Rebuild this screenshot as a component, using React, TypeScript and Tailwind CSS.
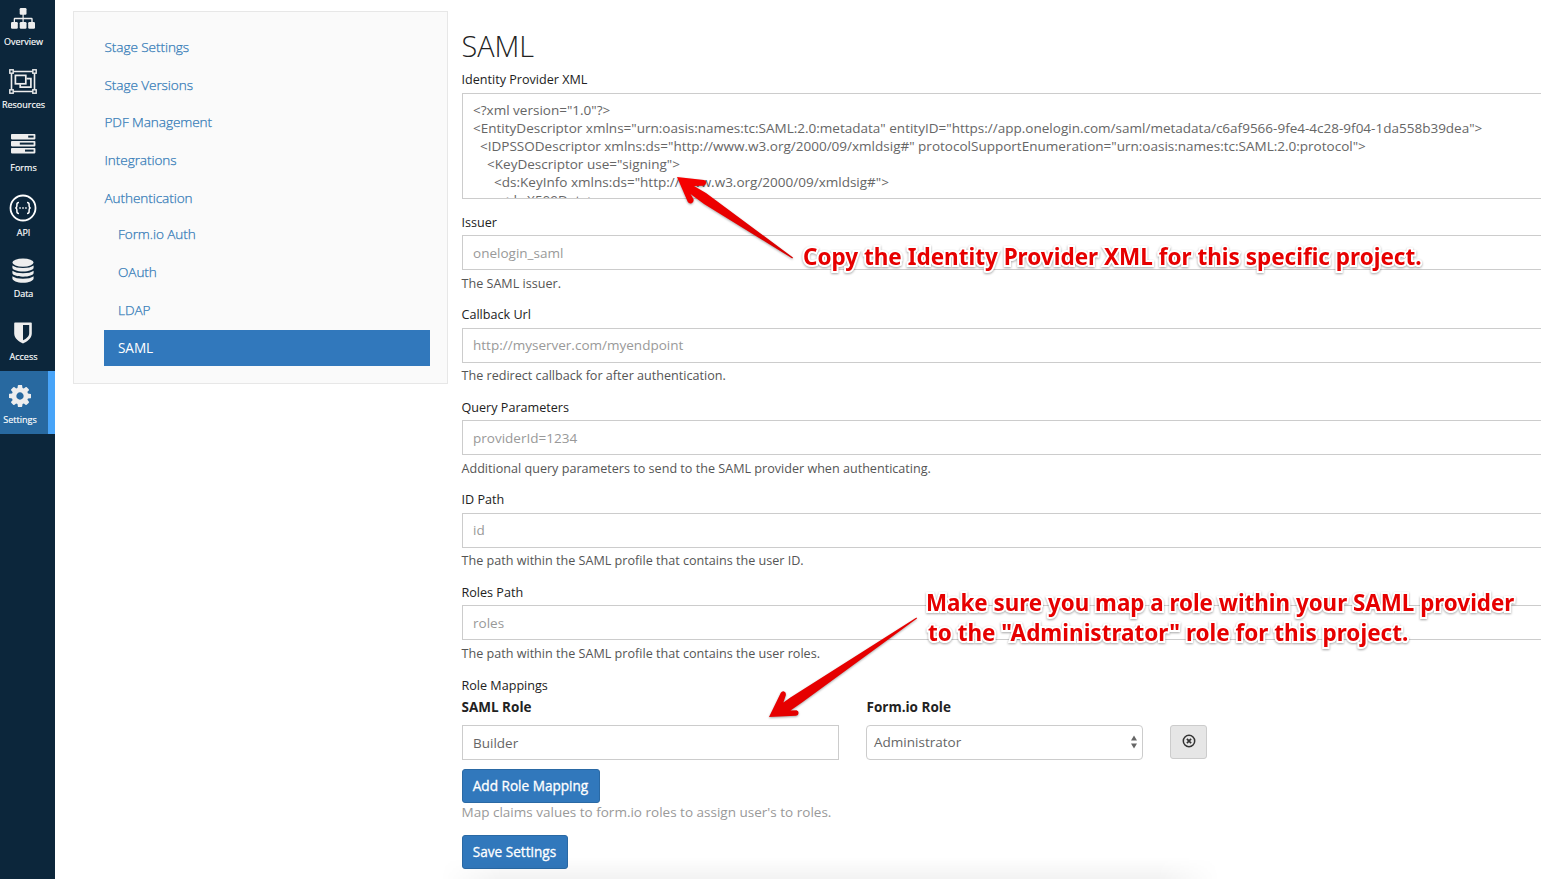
import React from 'react';

const OPEN = "font-['Open_Sans','Noto_Sans',sans-serif]";

function Sitemap() {
  return (
    <svg width="26" height="22" viewBox="0 0 26 22" fill="#eee">
      <rect x="9.7" y="0" width="6.8" height="6.8" rx="1.2" />
      <rect x="1" y="14" width="6.8" height="6.8" rx="1.2" />
      <rect x="9.7" y="14" width="6.8" height="6.8" rx="1.2" />
      <rect x="18.2" y="14" width="6.8" height="6.8" rx="1.2" />
      <path d="M12.5 6h1.2v3.8h7.8q1.2 0 1.2 1.2v3.5h-1.4v-3.3h-7.6v3.3h-1.2v-3.3H5v3.3H3.7V11q0-1.2 1.2-1.2h7.6z" />
    </svg>
  );
}

function ObjectGroup() {
  return (
    <svg width="28" height="25" viewBox="0 0 28 25" fill="none" stroke="#eee" strokeWidth="1.4">
      <path d="M4.5 2.5h19M4.5 22.5h19M2.5 4.5v16M25.5 4.5v16" strokeWidth="1.6" />
      <rect x=".8" y=".8" width="3.4" height="3.4" />
      <rect x="23.8" y=".8" width="3.4" height="3.4" />
      <rect x=".8" y="20.8" width="3.4" height="3.4" />
      <rect x="23.8" y="20.8" width="3.4" height="3.4" />
      <rect x="6.4" y="6.4" width="10.4" height="8.4" strokeWidth="1.7" />
      <path d="M17.5 9.6h4.4v8.6H11.2v-3" strokeWidth="1.7" />
    </svg>
  );
}

function Tasks() {
  return (
    <svg width="26" height="20" viewBox="0 0 26 20">
      <g fill="#eee">
        <rect x="1" y="0" width="24.4" height="5.4" rx=".8" />
        <rect x="1" y="7" width="24.4" height="5.4" rx=".8" />
        <rect x="1" y="14" width="24.4" height="5.4" rx=".8" />
      </g>
      <g fill="#0c263b">
        <rect x="18.2" y="1.6" width="5.4" height="2" />
        <rect x="9.8" y="8.6" width="13.8" height="2" />
        <rect x="15" y="15.6" width="8.6" height="2" />
      </g>
    </svg>
  );
}

function Api() {
  return (
    <svg width="28" height="28" viewBox="0 0 28 28" fill="none" stroke="#fff">
      <circle cx="14" cy="14" r="12.5" strokeWidth="1.8" />
      <path d="M10 8.6c-1.7 0-2.1.7-2.1 2v1.5c0 1.100-.4 1.700-1.500 1.900 1.100.2 1.500.8 1.500 1.900v1.500c0 1.300.4 2 2.100 2M18 8.600c1.700 0 2.100.7 2.100 2v1.500c0 1.100.4 1.700 1.500 1.900-1.100.2-1.500.8-1.500 1.900v1.500c0 1.300-.4 2-2.100 2" strokeWidth="1.500" />
      <path d="M10.300 14h1.500M13.250 14h1.500M16.200 14h1.500" strokeWidth="1.500" />
    </svg>
  );
}

function Database() {
  return (
    <svg width="22" height="26" viewBox="0 0 22 26" fill="#eee">
      <ellipse cx="11" cy="4.600" rx="10.600" ry="4.200" />
      <path d="M.4 7.600c2.200 1.700 6 2.500 10.600 2.500s8.400-.8 10.600-2.500v2.200c0 2-4.700 3.700-10.600 3.700S.4 11.800.4 9.800z" />
      <path d="M.4 12.800c2.200 1.700 6 2.500 10.600 2.500s8.400-.8 10.600-2.500V15c0 2-4.700 3.700-10.600 3.700S.4 17 .4 15z" />
      <path d="M.4 18.200c2.200 1.700 6 2.500 10.600 2.500s8.400-.8 10.600-2.500v2.200c0 2.200-4.700 4.300-10.600 4.300S.4 22.600.4 20.400z" />
    </svg>
  );
}

function Shield() {
  return (
    <svg width="18" height="22" viewBox="0 0 18 22">
      <path
        fill="#eee"
        fillRule="evenodd"
        d="M1 .4h16q.8 0 .8.8v10.300c0 5.200-5.200 8.300-8.800 9.900-3.600-1.600-8.800-4.700-8.800-9.900V1.200Q.2.4 1 .4zM9 3v15.300c2.600-1.400 6.200-3.900 6.200-6.900V3z"
      />
    </svg>
  );
}

function Cog() {
  return (
    <svg width="22" height="22" viewBox="0 0 1536 1536">
      <path
        fill="#eee"
        d="M1024 768q0-106-75-181t-181-75-181 75-75 181 75 181 181 75 181-75 75-181zm512-109v222q0 12-8 23t-20 13l-185 28q-19 54-39 91 35 50 107 138 10 12 10 25t-9 23q-27 37-99 108t-94 71q-12 0-26-9l-138-108q-44 23-91 38-16 136-29 186-7 28-36 28H657q-14 0-24.500-8.500T621 1506l-28-184q-49-16-90-37l-141 107q-10 9-25 9-14 0-25-11-126-114-165-168-7-10-7-23 0-12 8-23 15-21 51-66.500t54-70.500q-27-50-41-99L29 913q-13-2-21-12.500T0 877V655q0-12 8-23t19-13l186-28q14-46 39-92-40-57-107-138-10-12-10-24 0-10 9-23 26-36 98.500-107.500T337 135q13 0 26 10l138 107q44-23 91-38 16-136 29-186 7-28 36-28h222q14 0 24.500 8.500T915 30l28 184q49 16 90 37l142-107q9-9 24-9 13 0 25 10 129 119 165 170 7 8 7 22 0 12-8 23-15 21-51 66.500t-54 70.500q26 50 41 98l183 28q13 2 21 12.500t8 23.500z"
      />
    </svg>
  );
}

const rail = [
  { label: 'Overview', icon: <Sitemap />, row: 'h-[63px] -mt-[7px]', box: 'h-[23px]' },
  { label: 'Resources', icon: <ObjectGroup />, row: 'h-[63px]', box: 'h-[25px]' },
  { label: 'Forms', icon: <Tasks />, row: 'h-[63px]', box: 'h-[23px]' },
  { label: 'API', icon: <Api />, row: 'h-[65px]', box: 'h-[28px]' },
  { label: 'Data', icon: <Database />, row: 'h-[61px]', box: 'h-[25px]' },
  { label: 'Access', icon: <Shield />, row: 'h-[63px]', box: 'h-[24px]' },
];

function Rail() {
  return (
    <nav className="flex w-[55px] shrink-0 flex-col bg-[#0c263b] text-[9px] leading-[12px] text-white [-webkit-text-stroke:0.15px]">
      {rail.map((r) => (
        <div key={r.label} className={`flex flex-col items-center justify-end pr-[8px] ${r.row}`}>
          <div className={`mr-[0.500px] flex items-start ${r.box}`}>{r.icon}</div>
          <div className="mt-[5px] mb-[8px] h-[12px]">{r.label}</div>
        </div>
      ))}
      <div className="flex h-[63px] flex-col items-center border-r-[7px] border-[#48a4f8] bg-[#2869a0] pt-[14px] pr-[8px]">
        <Cog />
        <div className="mt-[7px]">Settings</div>
      </div>
    </nav>
  );
}

const links = ['Stage Settings', 'Stage Versions', 'PDF Management', 'Integrations', 'Authentication'];
const sub = ['Form.io Auth', 'OAuth', 'LDAP'];

function SideMenu() {
  return (
    <aside className="mt-[11px] ml-[18px] h-[373px] w-[375px] shrink-0 border border-[#e7e7e7] bg-[#fafafa] pt-[16.300px] pl-[30.500px] text-[13.600px] font-light tracking-[-0.08px] text-[#337ab7] [-webkit-text-stroke:0.25px]">
      {links.map((l) => (
        <div key={l} className="flex h-[37.750px] items-center">{l}</div>
      ))}
      <div className="-mt-[0.800px] -ml-[0.500px] w-[326px]">
        {sub.map((l) => (
          <div key={l} className="flex h-[38px] items-center pb-[2px] pl-[14px]">{l}</div>
        ))}
        <div className="flex h-[36px] items-center bg-[#3178bc] pl-[14px] font-normal text-white [-webkit-text-stroke:0]">SAML</div>
      </div>
    </aside>
  );
}

const xml = `<?xml version="1.0"?>
<EntityDescriptor xmlns="urn:oasis:names:tc:SAML:2.0:metadata" entityID="https://app.onelogin.com/saml/metadata/c6af9566-9fe4-4c28-9f04-1da558b39dea">
  <IDPSSODescriptor xmlns:ds="http://www.w3.org/2000/09/xmldsig#" protocolSupportEnumeration="urn:oasis:names:tc:SAML:2.0:protocol">
    <KeyDescriptor use="signing">
      <ds:KeyInfo xmlns:ds="http://www.w3.org/2000/09/xmldsig#">
        <ds:X509Data>`;

const fields = [
  { label: 'Issuer', value: 'onelogin_saml', help: 'The SAML issuer.' },
  { label: 'Callback Url', value: 'http://myserver.com/myendpoint', help: 'The redirect callback for after authentication.' },
  { label: 'Query Parameters', value: 'providerId=1234', help: 'Additional query parameters to send to the SAML provider when authenticating.' },
  { label: 'ID Path', value: 'id', help: 'The path within the SAML profile that contains the user ID.' },
  { label: 'Roles Path', value: 'roles', help: 'The path within the SAML profile that contains the user roles.' },
];

function Annotations() {
  const note =
    "absolute origin-left whitespace-nowrap font-['Noto_Sans','Open_Sans',sans-serif] text-[23.400px] leading-[30px] font-bold text-[#e60000] [paint-order:stroke_fill] [-webkit-text-stroke:4px_white] [filter:drop-shadow(0_1px_1px_rgba(0,0,0,0.35))]";
  return (
    <>
      <svg className="absolute inset-0" width="1541" height="879" viewBox="0 0 1541 879">
        <defs>
          <linearGradient id="red" x1="0" y1="0" x2="1" y2="1">
            <stop offset="0" stopColor="#f80000" />
            <stop offset="1" stopColor="#d40000" />
          </linearGradient>
        </defs>
        <g fill="url(#red)" className="[filter:drop-shadow(0_1px_1px_rgba(0,0,0,0.35))]">
          <path d="M677 177l27 3q2.500.5 2 3.200-.4 2.300-3 2.500l-9 .3 12 7L793 257.500l-.7.900L704 204 690.500 194l3 5q.6 3.200-1.800 4.200-2.600.9-4-1.400z" />
          <path d="M769 717l11.800-24.200q1.200-2 3.300-1.400 2.200.8 1.800 3.500l-2.500 7.500 7-5L916.500 617.400l.5 1L802 702.500l-11.500 8 6-.2q2.200.4 2.100 2.700-.2 2.600-2.600 2.800z" />
        </g>
      </svg>
      <div className={`${note} top-[241px] left-[802.500px] [transform:scaleX(0.962)]`}>Copy the Identity Provider XML for this specific project.</div>
      <div className={`${note} top-[586.500px] left-[926px] [transform:scaleX(0.956)]`}>Make sure you map a role within your SAML provider</div>
      <div className={`${note} top-[616.500px] left-[927.500px] [transform:scaleX(0.962)]`}>to the "Administrator" role for this project.</div>
    </>
  );
}

export default function App() {
  return (
    <div className={`relative flex h-[879px] w-[1541px] overflow-hidden bg-white ${OPEN}`}>
      <Rail />
      <SideMenu />
      <main className="relative ml-[13.500px] min-w-0 flex-1 text-[12.600px] leading-[18px] text-[#222]">
        <h1 className="mt-[27px] h-[44px] text-[28.800px] leading-[38px] font-light text-[#222]">SAML</h1>
        <div>Identity Provider XML</div>
        <div className="mt-[4px] -mr-[20px] h-[106px] overflow-hidden border border-[#ccc] px-[10.500px] pt-[7px] text-[13.525px] whitespace-pre text-[#666]">
          {xml}
        </div>
        <div className="pt-[14.600px] pb-[0.500px]">
          {fields.map((f) => (
            <div key={f.label} className="h-[92.500px]">
              <div>{f.label}</div>
              <div className="mt-[3.700px] -mr-[20px] flex h-[35px] items-center border border-[#ccc] pl-[10.500px] text-[13.525px] text-[#999]">
                {f.value}
              </div>
              <div className="mt-[4.300px] text-[#555]">{f.help}</div>
            </div>
          ))}
        </div>
        <div>Role Mappings</div>
        <div className="mt-[3.400px] flex text-[13.500px] font-bold">
          <div className="w-[405px]">SAML Role</div>
          <div>Form.io Role</div>
        </div>
        <div className="mt-[9px] flex text-[13.525px] text-[#666]">
          <div className="flex h-[35px] w-[377px] items-center border border-[#ccc] pt-[1px] pl-[10.500px]">Builder</div>
          <div className="ml-[27px] flex h-[35px] w-[277px] items-center justify-between rounded-[4px] border border-[#ccc] pr-[4px] pl-[7.500px]">
            Administrator
            <svg width="8" height="14" viewBox="0 0 8 14" fill="#666">
              <path d="M4 .5L7 5.500H1zM1 8.500h6L4 13.500z" />
            </svg>
          </div>
          <div className="ml-[27px] flex h-[34px] w-[37px] items-center justify-center rounded-[3px] border border-[#ccc] bg-[#e6e6e6] pb-[1px] pl-[1px]">
            <svg width="14" height="14" viewBox="0 0 14 14" fill="none" stroke="#333">
              <circle cx="7" cy="7" r="5.700" strokeWidth="1.500" />
              <path d="M4.900 4.900l4.200 4.200M9.100 4.900L4.900 9.100" strokeWidth="1.700" />
            </svg>
          </div>
        </div>
        <div className="mt-[9px] flex h-[34px] w-[138px] items-center justify-center rounded-[3px] border border-[#2a69a4] bg-[#3178bc] text-[13.600px] text-white [-webkit-text-stroke:0.3px]">
          Add Role Mapping
        </div>
        <div className="text-[13.525px] text-[#999]">Map claims values to form.io roles to assign user's to roles.</div>
        <div className="mt-[14px] flex h-[34px] w-[106px] items-center justify-center rounded-[3px] border border-[#2a69a4] bg-[#3178bc] text-[13.600px] text-white [-webkit-text-stroke:0.3px]">
          Save Settings
        </div>
      </main>
      <div className="absolute bottom-0 left-[440px] h-[22px] w-[780px] bg-gradient-to-b from-black/0 to-black/[0.05] [mask-image:linear-gradient(to_right,transparent,black_8%,black_92%,transparent)]" />
      <Annotations />
    </div>
  );
}
